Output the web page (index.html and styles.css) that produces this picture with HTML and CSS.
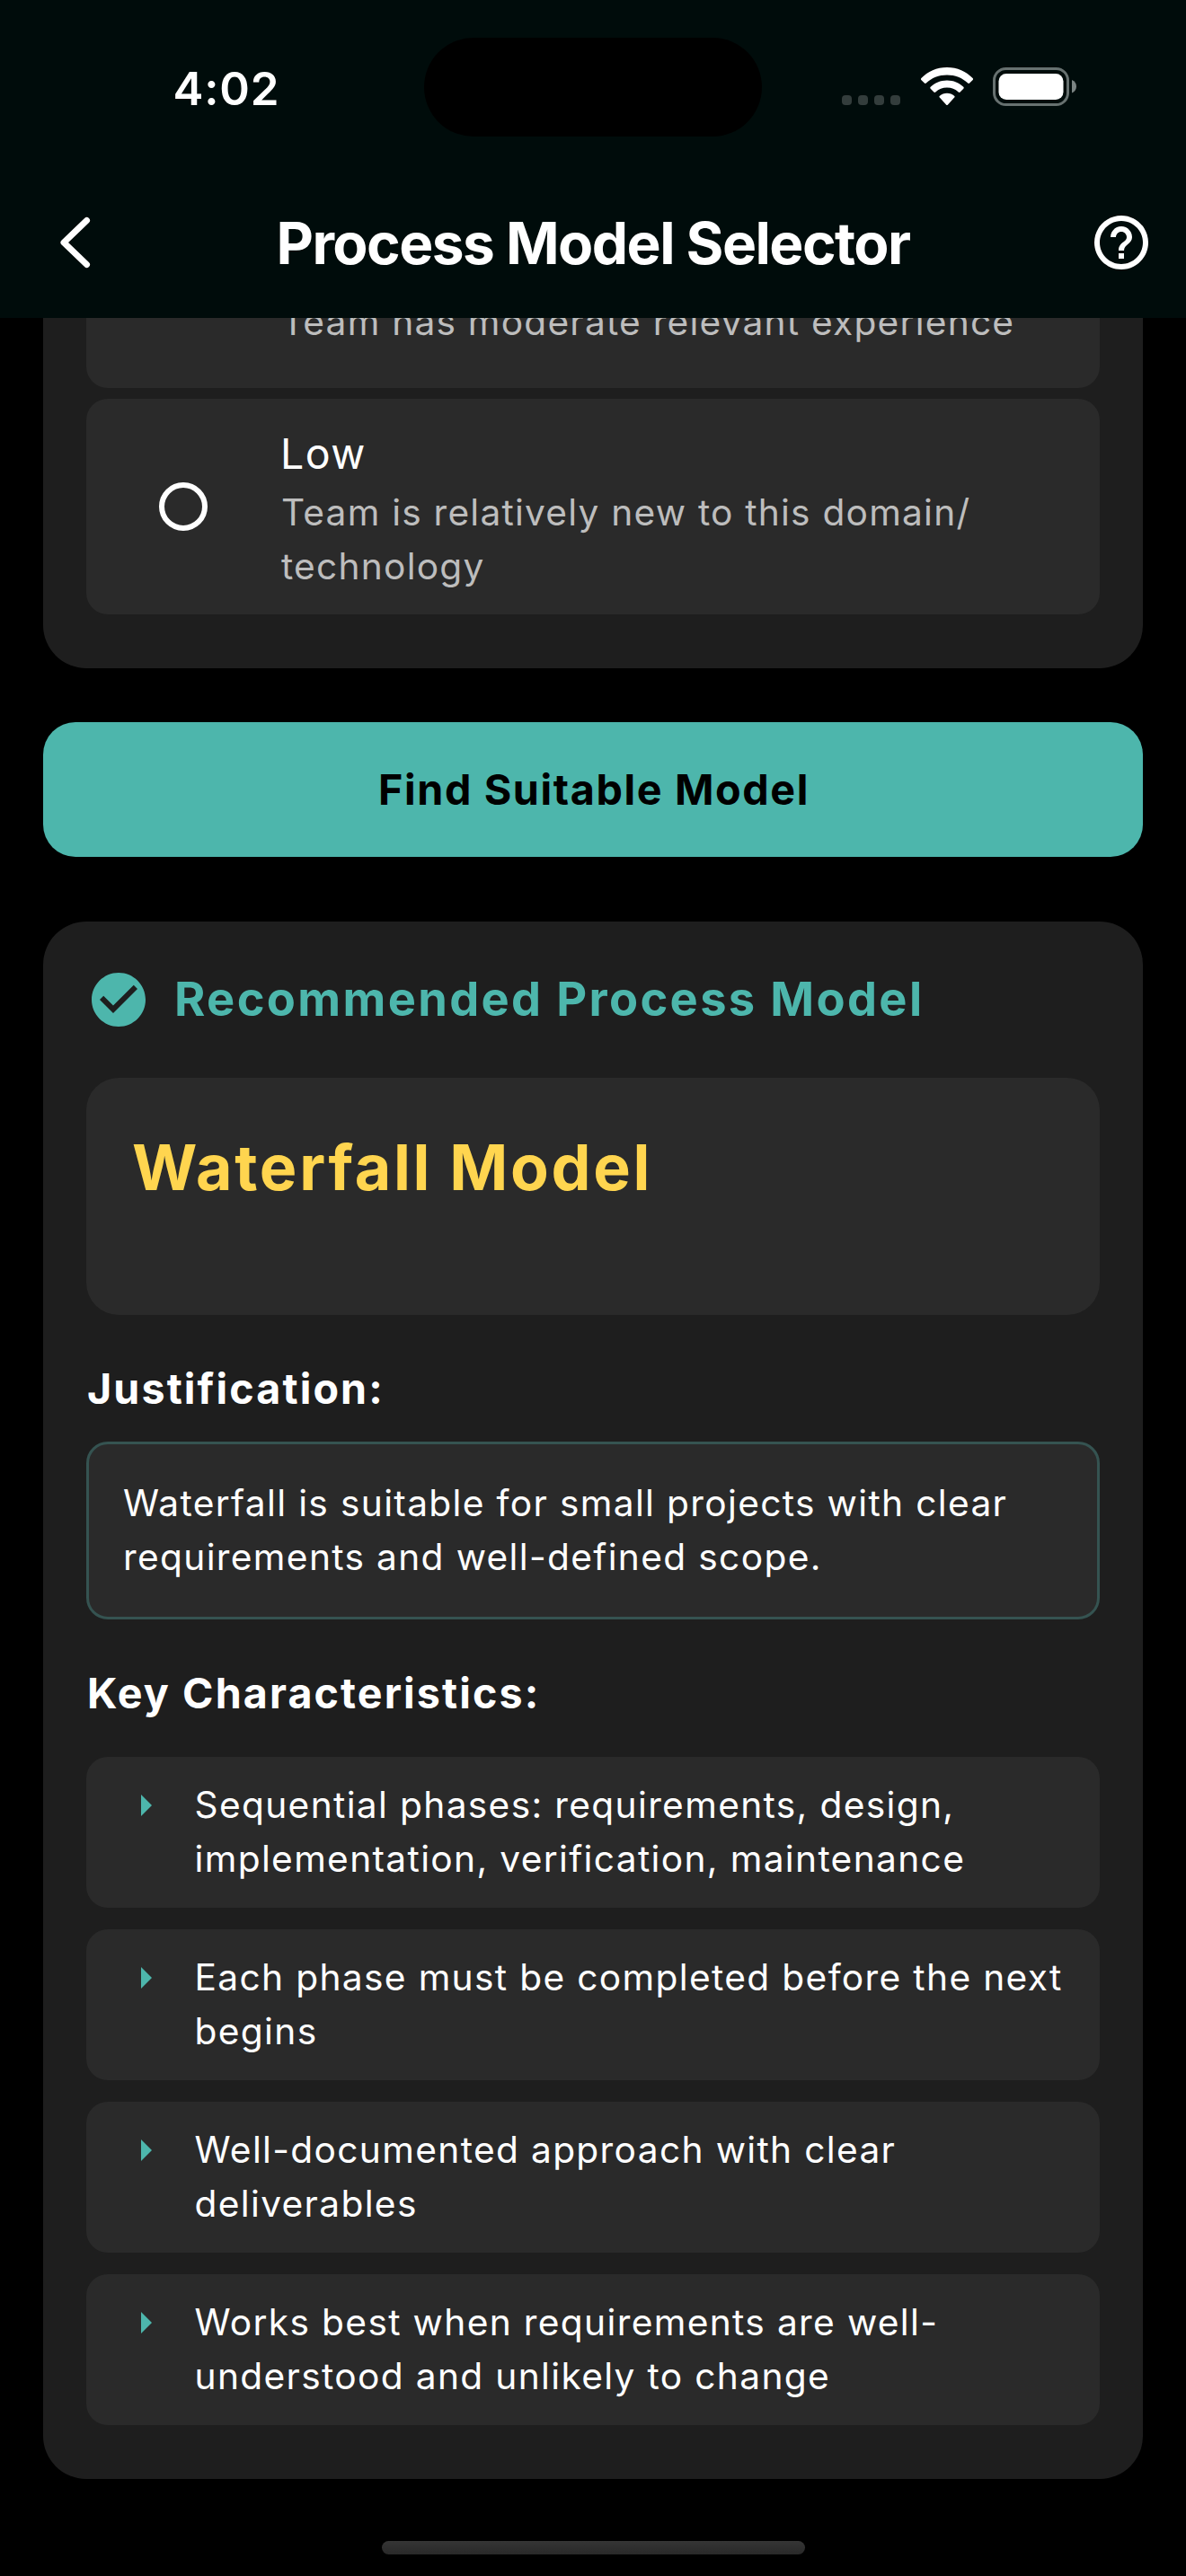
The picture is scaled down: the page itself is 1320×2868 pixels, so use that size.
FILE: index.html
```html
<!DOCTYPE html>
<html lang="en">
<head>
<meta charset="utf-8">
<title>Process Model Selector</title>
<link rel="stylesheet" href="styles.css">
</head>
<body>
<div class="screen">
  <header class="header">
    <div class="status">
      <span class="time">4:02</span>
      <div class="indicators">
        <div class="signal"><i></i><i></i><i></i><i></i></div>
        <svg class="wifi" width="58" height="42" viewBox="0 0 58 42" fill="#fff">
          <path d="M29 0C40.4 0 50.5 4.6 57.6 12.1c.6.6.6 1.3.1 1.9l-3.6 3.6c-.6.6-1.3.6-1.9 0C46.1 11.8 38 8.600 29 8.600S11.900 11.800 5.800 17.600c-.6.6-1.300.6-1.900 0L.3 14c-.5-.6-.5-1.300.1-1.900C7.500 4.600 17.600 0 29 0z"/>
          <path d="M29 14.500c7.200 0 13.600 2.800 18.300 7.300.6.6.6 1.300 0 1.900l-3.700 3.800c-.6.6-1.200.6-1.900 0-3.400-3-7.800-4.900-12.700-4.900s-9.300 1.900-12.700 4.900c-.7.6-1.300.6-1.900 0l-3.700-3.800c-.6-.6-.6-1.300 0-1.900 4.700-4.500 11.100-7.300 18.300-7.300z"/>
          <path d="M29 28.700c3.100 0 6 1.200 8.100 3 .7.600.7 1.300.1 1.900l-7.200 7.800c-.6.7-1.400.7-2 0l-7.200-7.800c-.6-.6-.6-1.300.1-1.900 2.100-1.800 5-3 8.100-3z"/>
        </svg>
        <svg class="battery" width="93" height="43" viewBox="0 0 93 43">
          <rect x="1.500" y="1.500" width="82" height="40" rx="13" fill="none" stroke="#677170" stroke-width="3"/>
          <rect x="6.500" y="7" width="72" height="29" rx="8.500" fill="#fff"/>
          <path d="M88 14c3.400 1.300 5 4.200 5 7.300s-1.600 6-5 7.300z" fill="#7b8483"/>
        </svg>
      </div>
      <div class="island"></div>
    </div>
    <nav class="navbar">
      <svg class="back" width="72" height="72" viewBox="0 0 72 72" fill="none" stroke="#fff" stroke-width="7" stroke-linecap="round" stroke-linejoin="round"><path d="M48.500 11.500 23 36l25.500 24.500"/></svg>
      <h1>Process Model Selector</h1>
      <svg class="help" width="72" height="72" viewBox="0 0 24 24" fill="#fff"><path d="M11 18h2v-2h-2v2zm1-16C6.480 2 2 6.480 2 12s4.480 10 10 10 10-4.480 10-10S17.520 2 12 2zm0 18c-4.410 0-8-3.590-8-8s3.590-8 8-8 8 3.590 8 8-3.590 8-8 8zm0-14c-2.210 0-4 1.790-4 4h2c0-1.100.9-2 2-2s2 .9 2 2c0 2-3 1.750-3 5h2c0-2.250 3-2.500 3-5 0-2.210-1.790-4-4-4z"/></svg>
    </nav>
  </header>

  <main class="content">
    <section class="card card-options">
      <div class="option option-clipped">
        <p class="option-text">Team has moderate relevant experience</p>
      </div>
      <div class="option">
        <span class="radio"></span>
        <div>
          <h3 class="option-title">Low</h3>
          <p class="option-text">Team is relatively new to this domain/<br>technology</p>
        </div>
      </div>
    </section>

    <button class="find">Find Suitable Model</button>

    <section class="card card-result">
      <div class="result-head">
        <svg width="72" height="72" viewBox="0 0 24 24" fill="#4db6ac"><path d="M12 2C6.480 2 2 6.480 2 12s4.480 10 10 10 10-4.480 10-10S17.520 2 12 2zm-2 15l-5-5 1.410-1.410L10 14.170l7.590-7.590L19 8l-9 9z"/></svg>
        <h2>Recommended Process Model</h2>
      </div>
      <div class="model">Waterfall Model</div>
      <h3 class="label label-why">Justification:</h3>
      <p class="why">Waterfall is suitable for small projects with clear<br>requirements and well-defined scope.</p>
      <h3 class="label label-key">Key Characteristics:</h3>
      <ul class="traits">
        <li>Sequential phases: requirements, design,<br>implementation, verification, maintenance</li>
        <li>Each phase must be completed before the next<br>begins</li>
        <li>Well-documented approach with clear<br>deliverables</li>
        <li>Works best when requirements are well-<br>understood and unlikely to change</li>
      </ul>
    </section>
    <div class="home-indicator"></div>
  </main>
</div>
</body>
</html>
```
FILE: styles.css
```css
* { box-sizing: border-box; margin: 0; padding: 0; }

body {
  background: #000;
  color: #fff;
  font-family: Inter, "Liberation Sans", sans-serif;
}

.screen {
  width: 1320px;
  height: 2868px;
  overflow: hidden;
  background: #000;
}

/* Header */
.header { height: 354px; background: #000c0b; }

.status {
  position: relative;
  display: flex;
  justify-content: space-between;
  align-items: flex-start;
  height: 186px;
  padding: 68px 122px 0 192.5px;
}

.time { font-size: 51px; line-height: 61px; font-weight: 600; letter-spacing: 0.8px; }

.indicators { display: flex; align-items: flex-start; padding-top: 7px; }

.signal { display: flex; gap: 7px; padding-top: 31px; margin-right: 22.5px; }
.signal i { width: 11px; height: 11px; border-radius: 4px; background: #333d3c; }

.battery { margin-left: 22.5px; }

.island {
  position: absolute;
  left: 472px;
  top: 42px;
  width: 376px;
  height: 110px;
  border-radius: 55px;
  background: #000;
}

.navbar {
  display: grid;
  grid-template-columns: 72px 1fr 72px;
  align-items: center;
  height: 168px;
  padding: 0 36px 0 48px;
}

.navbar h1 {
  font-size: 64px;
  line-height: 78px;
  font-weight: 700;
  letter-spacing: -1.54px;
  text-align: center;
  white-space: nowrap;
  padding: 2px 12px 0 0;
}

/* Cards */
.content { display: flex; flex-direction: column; padding: 0 48px; }

.card { padding: 48px; border-radius: 48px; background: #1e1e1e; }

.card-options {
  display: flex;
  flex-direction: column;
  gap: 12px;
  padding: 0 48px 60px;
  border-radius: 0 0 48px 48px;
}

.option {
  display: grid;
  grid-template-columns: 216px 1fr;
  align-items: center;
  height: 240px;
  padding-top: 1px;
  border-radius: 24px;
  background: #2a2a2a;
}

.option-clipped {
  height: 78px;
  padding-top: 0;
  align-items: start;
  border-radius: 0 0 24px 24px;
  overflow: hidden;
}

.option-clipped .option-text { grid-column: 2; margin-top: -25px; }

.radio {
  justify-self: center;
  width: 54px;
  height: 54px;
  margin-bottom: 1px;
  border: 6px solid #fff;
  border-radius: 50%;
}

.option-title { font-size: 46.5px; line-height: 72px; font-weight: 400; letter-spacing: 1.45px; }

.option-text {
  font-size: 40.7px;
  line-height: 60px;
  letter-spacing: 1.21px;
  color: #bdbdbd;
  padding-left: 1px;
  white-space: nowrap;
}

.find {
  height: 150px;
  margin: 60px 0 72px;
  border: 0;
  border-radius: 36px;
  background: #4db6ac;
  color: #000;
  font: 700 46.7px/60px Inter, "Liberation Sans", sans-serif;
  letter-spacing: 1.62px;
  padding-left: 2px;
}

.card-result { height: 1734px; }

.result-head { display: flex; align-items: center; gap: 26px; height: 78px; }

.result-head h2 {
  font-size: 52.4px;
  line-height: 76px;
  font-weight: 700;
  letter-spacing: 2.35px;
  color: #4db6ac;
  padding-bottom: 2px;
}

.model {
  height: 264px;
  margin-top: 48px;
  padding: 46px 51px;
  border-radius: 36px;
  background: #2a2a2a;
  color: #ffd54f;
  font-size: 69.8px;
  line-height: 108px;
  font-weight: 700;
  letter-spacing: 2.69px;
}

.label {
  padding: 0 1px;
  font-size: 46.6px;
  line-height: 60px;
  font-weight: 700;
  letter-spacing: 2.11px;
}

.label-why { margin: 52px 0 29px; }
.label-key { margin: 52px 0 41px; }

.why, .traits li {
  font-size: 40.7px;
  line-height: 60px;
  letter-spacing: 1.33px;
  white-space: nowrap;
  background: #2a2a2a;
  border-radius: 24px;
}

.why { padding: 36px 38px; border: 3px solid #355351; }

.traits { display: flex; flex-direction: column; gap: 24px; list-style: none; }

.traits li { display: flex; padding: 24px 0 24px 61px; }

.traits li::before {
  content: "";
  flex: none;
  width: 12px;
  height: 24px;
  margin: 18px 47.5px 0 0;
  background: #4db6ac;
  clip-path: polygon(0 0, 100% 50%, 0 100%);
}

.home-indicator {
  align-self: center;
  width: 471px;
  height: 15px;
  margin-top: 69px;
  border-radius: 8px;
  background: linear-gradient(#353535, #292929);
}
```
